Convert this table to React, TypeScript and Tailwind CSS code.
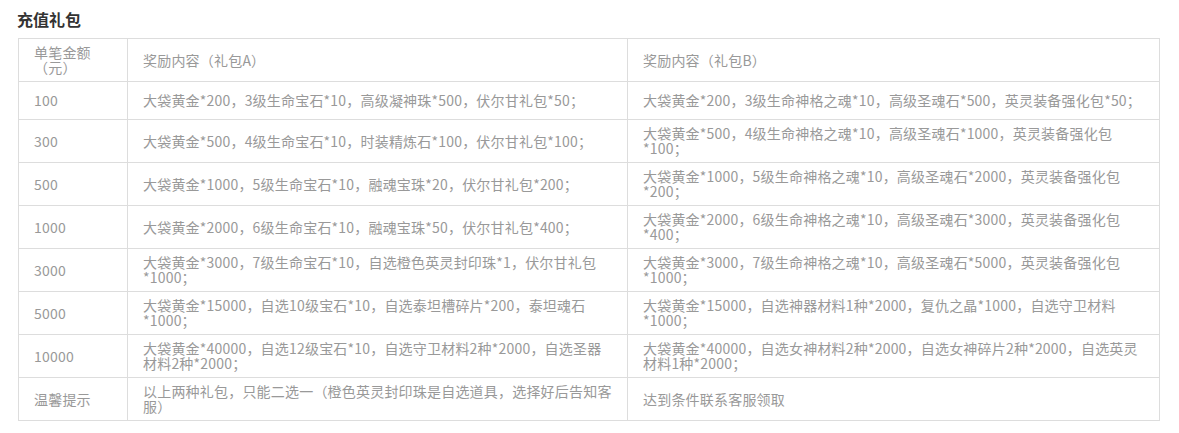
const ROWS = [
  {
    amount: "100",
    a: "大袋黄金*200，3级生命宝石*10，高级凝神珠*500，伏尔甘礼包*50；",
    b: "大袋黄金*200，3级生命神格之魂*10，高级圣魂石*500，英灵装备强化包*50；",
  },
  {
    amount: "300",
    a: "大袋黄金*500，4级生命宝石*10，时装精炼石*100，伏尔甘礼包*100；",
    b: "大袋黄金*500，4级生命神格之魂*10，高级圣魂石*1000，英灵装备强化包*100；",
  },
  {
    amount: "500",
    a: "大袋黄金*1000，5级生命宝石*10，融魂宝珠*20，伏尔甘礼包*200；",
    b: "大袋黄金*1000，5级生命神格之魂*10，高级圣魂石*2000，英灵装备强化包*200；",
  },
  {
    amount: "1000",
    a: "大袋黄金*2000，6级生命宝石*10，融魂宝珠*50，伏尔甘礼包*400；",
    b: "大袋黄金*2000，6级生命神格之魂*10，高级圣魂石*3000，英灵装备强化包*400；",
  },
  {
    amount: "3000",
    a: "大袋黄金*3000，7级生命宝石*10，自选橙色英灵封印珠*1，伏尔甘礼包*1000；",
    b: "大袋黄金*3000，7级生命神格之魂*10，高级圣魂石*5000，英灵装备强化包*1000；",
  },
  {
    amount: "5000",
    a: "大袋黄金*15000，自选10级宝石*10，自选泰坦槽碎片*200，泰坦魂石*1000；",
    b: "大袋黄金*15000，自选神器材料1种*2000，复仇之晶*1000，自选守卫材料*1000；",
  },
  {
    amount: "10000",
    a: "大袋黄金*40000，自选12级宝石*10，自选守卫材料2种*2000，自选圣器材料2种*2000；",
    b: "大袋黄金*40000，自选女神材料2种*2000，自选女神碎片2种*2000，自选英灵材料1种*2000；",
  },
  {
    amount: "温馨提示",
    a: "以上两种礼包，只能二选一（橙色英灵封印珠是自选道具，选择好后告知客服）",
    b: "达到条件联系客服领取",
  },
];

const cell =
  "border border-[#dddddd] h-[38px] px-[15px] py-[6px] align-middle text-left font-normal";

export default function App() {
  return (
    <div className="bg-white w-[1179px] h-[433px] pl-[18px] pr-[20px] pt-[9px] font-['Noto_Sans_CJK_SC',sans-serif] text-[14px] leading-[15px] tracking-[0.2px] text-[#999999] [text-spacing-trim:space-all]">
      <h3 className="text-[16px] leading-[20px] font-bold tracking-normal text-[#333333] -ml-[1px] mb-[9px]">
        充值礼包
      </h3>
      <table className="w-[1141px] border-collapse table-fixed">
        <colgroup>
          <col className="w-[109px]" />
          <col className="w-[500px]" />
          <col className="w-[532px]" />
        </colgroup>
        <thead>
          <tr>
            <th className={`${cell} h-[43px]`}>单笔金额（元）</th>
            <th className={cell}>奖励内容（礼包A）</th>
            <th className={cell}>奖励内容（礼包B）</th>
          </tr>
        </thead>
        <tbody>
          {ROWS.map((r) => (
            <tr key={r.amount}>
              <td className={cell}>{r.amount}</td>
              <td className={cell}>{r.a}</td>
              <td className={cell}>{r.b}</td>
            </tr>
          ))}
        </tbody>
      </table>
    </div>
  );
}
